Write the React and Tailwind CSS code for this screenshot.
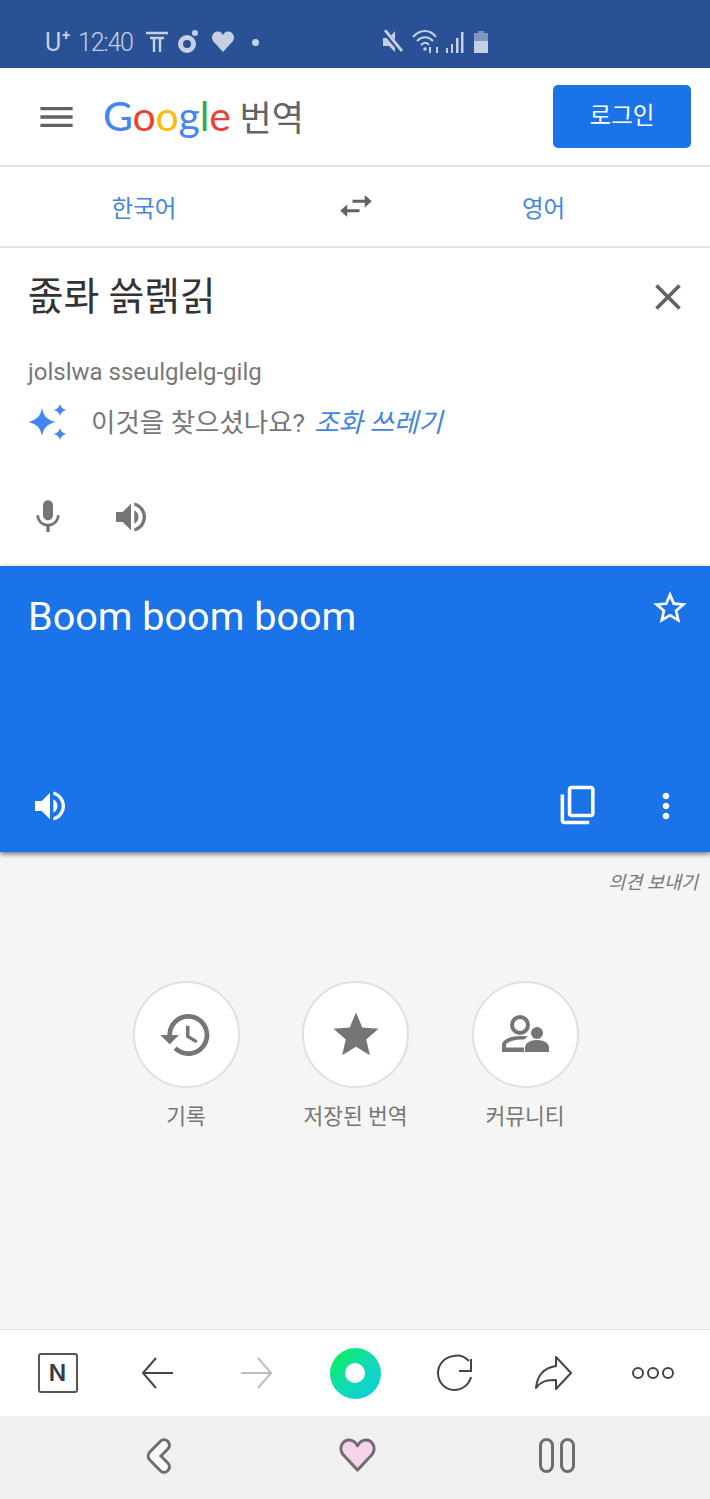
import React from 'react'

const KR = { fontFamily: 'Roboto, "Noto Sans CJK KR", sans-serif' }

const paths = {
  menu: 'M3 18h18v-2H3v2zm0-5h18v-2H3v2zm0-7v2h18V6H3z',
  swap: 'M6.99 11L3 15l3.99 4v-3H14v-2H6.99v-3zM21 9l-3.99-4v3H10v2h7.01v3L21 9z',
  close: 'M19 6.41L17.59 5 12 10.59 6.41 5 5 6.41 10.59 12 5 17.59 6.41 19 12 13.41 17.59 19 19 17.59 13.41 12z',
  mic: 'M12 14c1.66 0 2.99-1.34 2.99-3L15 5c0-1.66-1.34-3-3-3S9 3.34 9 5v6c0 1.66 1.34 3 3 3zm5.3-3c0 3-2.54 5.1-5.3 5.1S6.7 14 6.7 11H5c0 3.41 2.72 6.23 6 6.72V21h2v-3.28c3.28-.48 6-3.3 6-6.72h-1.7z',
  volume: 'M3 9v6h4l5 5V4L7 9H3zm13.5 3c0-1.77-1.02-3.29-2.5-4.03v8.05c1.48-.73 2.5-2.25 2.5-4.02zM14 3.23v2.06c2.89.86 5 3.54 5 6.71s-2.11 5.85-5 6.71v2.06c4.01-.91 7-4.49 7-8.77s-2.99-7.86-7-8.77z',
  starOutline: 'M22 9.24l-7.19-.62L12 2 9.19 8.63 2 9.24l5.46 4.73L5.82 21 12 17.27 18.18 21l-1.63-7.03L22 9.24zM12 15.4l-3.76 2.27 1-4.28-3.32-2.88 4.38-.38L12 6.1l1.71 4.04 4.38.38-3.32 2.88 1 4.28L12 15.4z',
  star: 'M12 17.27L18.18 21l-1.64-7.03L22 9.24l-7.19-.61L12 2 9.19 8.63 2 9.24l5.46 4.73L5.82 21z',
  copy: 'M2 6v15c0 1.100.9 2 2 2h14v-2H4V6H2zM8 1h11c1.100 0 2 .9 2 2v14c0 1.100-.9 2-2 2H8c-1.100 0-2-.9-2-2V3c0-1.100.9-2 2-2zm0 2v14h11V3H8z',
  dots: 'M12 8c1.1 0 2-.9 2-2s-.9-2-2-2-2 .9-2 2 .9 2 2 2zm0 2c-1.1 0-2 .9-2 2s.9 2 2 2 2-.9 2-2-.9-2-2-2zm0 6c-1.1 0-2 .9-2 2s.9 2 2 2 2-.9 2-2-.9-2-2-2z',
  history: 'M13 3c-4.97 0-9 4.03-9 9H1l3.89 3.89.07.14L9 12H6c0-3.87 3.13-7 7-7s7 3.13 7 7-3.13 7-7 7c-1.93 0-3.68-.79-4.94-2.06l-1.42 1.42C8.27 19.99 10.51 21 13 21c4.97 0 9-4.03 9-9s-4.03-9-9-9zm-1 5v5l4.28 2.54.72-1.21-3.5-2.08V8H12z',
}

const Icon = ({ name, className }) => (
  <svg viewBox="0 0 24 24" fill="currentColor" className={className} preserveAspectRatio="none">
    <path d={paths[name]} />
  </svg>
)

const StatusBar = () => (
  <div className="h-[68px] bg-[#2a5195] text-[#c5d0e3] flex items-center pt-[16px] pl-[45px]" style={KR}>
    <span className="text-[25px] leading-none w-[33px] relative">
      U<span className="absolute left-[17px] -top-[2px] text-[15px] font-bold">+</span>
    </span>
    <span className="text-[25px] leading-none tracking-[-1.2px] font-light w-[68px]">12:40</span>
    <svg viewBox="0 0 22 22" className="w-[22px] h-[22px]" fill="none" stroke="currentColor" strokeWidth="2.4">
      <path d="M0 2h22M4 7h14M8 7v14M14 7v14" />
    </svg>
    <svg viewBox="0 0 22 24" className="w-[22px] h-[24px] ml-[9px]" fill="none" stroke="currentColor" strokeWidth="5">
      <circle cx="10" cy="14" r="6.5" />
      <circle cx="18" cy="3" r="3" fill="currentColor" stroke="none" />
    </svg>
    <svg viewBox="0 0 24 24" className="w-[24px] h-[24px] ml-[12px]" fill="currentColor">
      <path d="M12 22L2 11C-1 6 3 1 7.500 1.500 9.500 1.700 11 3 12 5c1-2 2.500-3.300 4.500-3.500C21 1 25 6 22 11z" />
    </svg>
    <span className="w-[7px] h-[7px] rounded-full bg-current ml-[17px]" />
    <svg viewBox="0 0 20 24" className="w-[20px] h-[24px] ml-[124px]" fill="currentColor">
      <path d="M12 1v21l-6-6H0V8h6z" />
      <path d="M1 1l18 21" stroke="#2a5195" strokeWidth="5" />
      <path d="M2 0l17 21" stroke="currentColor" strokeWidth="2.800" />
    </svg>
    <svg viewBox="0 0 28 26" className="w-[28px] h-[26px] ml-[9px]" fill="none" stroke="currentColor" strokeWidth="2">
      <path d="M1 8c7-8 17-8 23 0M5 12c5-5 11-5 16 0M9 16c3-3 6-3 8 0" />
      <circle cx="13" cy="20" r="1.800" fill="currentColor" stroke="none" />
      <path d="M18 24v-6M25 24v-6" />
    </svg>
    <svg viewBox="0 0 18 22" className="w-[18px] h-[22px] ml-[6px]" fill="currentColor">
      <path d="M0 17h2v5H0zM5 13h2v9H5zM10 7h2.500v15H10zM15 1h2.500v21H15z" />
    </svg>
    <div className="w-[14px] h-[22px] ml-[10px] flex flex-col items-center">
      <div className="w-[6px] h-[2px] bg-[#7e95bd]" />
      <div className="w-[14px] h-[8px] bg-[#7e95bd]" />
      <div className="w-[14px] h-[12px] bg-[#c5d0e3]" />
    </div>
  </div>
)

const Header = () => (
  <div className="h-[99px] bg-white border-b-2 border-[#e2e2e2] flex items-center pl-[35px] pr-[19px]">
    <Icon name="menu" className="w-[43px] h-[40px] text-[#5f6368]" />
    <div className="flex items-baseline ml-[25px] -mt-[2px]">
      <span className="text-[41px] leading-none tracking-[-0.2px] font-normal" style={{ fontFamily: 'Lato, sans-serif' }}>
        <span className="text-[#4285f4]">G</span>
        <span className="text-[#ea4335]">o</span>
        <span className="text-[#fbbc05]">o</span>
        <span className="text-[#4285f4]">g</span>
        <span className="text-[#34a853]">l</span>
        <span className="text-[#ea4335]">e</span>
      </span>
      <span className="text-[35px] leading-none text-[#5f6368] ml-[9px]" style={KR}>번역</span>
    </div>
    <div className="ml-auto w-[138px] h-[63px] bg-[#1a73e8] rounded-[5px] flex items-center justify-center text-white text-[23.5px] font-normal -mt-[1px] pt-[1px]" style={KR}>
      로그인
    </div>
  </div>
)

const LangBar = () => (
  <div className="h-[81px] bg-white border-b-2 border-[#e2e2e2] grid grid-cols-[288px_136px_1fr] items-center text-[#4285e0] text-[23.5px] pt-[7px]" style={KR}>
    <span className="text-center">한국어</span>
    <div className="flex justify-center -mt-[9px]">
      <Icon name="swap" className="w-[42px] h-[38px] text-[#5f6368]" />
    </div>
    <span className="text-center pr-[47px]">영어</span>
  </div>
)

const Sparkles = () => (
  <svg viewBox="0 0 40 40" className="w-[40px] h-[40px] text-[#4285f4]" fill="currentColor">
    <path d="M14 5c1.500 8 5 12 14 14-9 2-12.500 6-14 14C12.500 25 9 21 0 19c9-2 12.500-6 14-14z" />
    <path d="M32 1c.8 3.500 2.700 5.200 6.500 6-3.800.8-5.700 2.500-6.500 6-.8-3.500-2.700-5.200-6.500-6 3.800-.8 5.700-2.500 6.500-6zM32 25c.8 3.500 2.700 5.200 6.500 6-3.800.8-5.700 2.500-6.500 6-.8-3.500-2.700-5.200-6.500-6 3.800-.8 5.700-2.500 6.500-6z" />
  </svg>
)

const SourcePanel = () => (
  <div className="h-[318px] bg-white pl-[28px] pr-[24px] relative" style={KR}>
    <div className="flex items-center justify-between pt-[24px]">
      <span className="text-[39px] leading-[50px] text-[#333] tracking-[-0.3px]">졼롸 쓹렑긹</span>
      <Icon name="close" className="w-[44px] h-[44px] text-[#5f6368] -mr-[4px]" />
    </div>
    <p className="text-[24px] leading-[30px] text-[#777] mt-[35px]">jolslwa sseulglelg-gilg</p>
    <div className="flex items-center mt-[16px] text-[26.5px] leading-[36px]">
      <Sparkles />
      <span className="text-[#777] ml-[23px]">이것을 찾으셨나요?</span>
      <span className="text-[#4285e0] italic ml-[9px]">조화 쓰레기</span>
    </div>
    <div className="flex items-center mt-[54px] text-[#757575]">
      <Icon name="mic" className="w-[40px] h-[40px]" />
      <Icon name="volume" className="w-[40px] h-[40px] ml-[43px]" />
    </div>
  </div>
)

const ResultPanel = () => (
  <div className="h-[286px] bg-[#1a73e8] shadow-[0_2px_5px_rgba(0,0,0,0.55)] relative z-10 pl-[28px] pr-[24px] text-white flex flex-col" style={KR}>
    <div className="flex justify-between items-start pt-[25px]">
      <span className="text-[39.6px] leading-[52px]">Boom boom boom</span>
      <Icon name="starOutline" className="w-[40px] h-[40px] -mt-[3px] -mr-[4px]" />
    </div>
    <div className="mt-auto pb-[26px] flex items-center">
      <Icon name="volume" className="w-[40px] h-[40px] ml-[2px]" />
      <Icon name="copy" className="w-[43px] h-[42px] ml-auto mr-[46px] -mt-[2px]" />
      <Icon name="dots" className="w-[40px] h-[40px]" />
    </div>
  </div>
)

const Shortcut = ({ label, children }) => (
  <div className="w-[169.5px] flex flex-col items-center">
    <div className="w-[107px] h-[107px] rounded-full bg-white border-2 border-[#e0e0e0] flex items-center justify-center text-[#757575]">
      {children}
    </div>
    <span className="text-[21.5px] leading-[28px] text-[#757575] mt-[15px] whitespace-nowrap">{label}</span>
  </div>
)

const People = () => (
  <svg viewBox="0 0 48 40" className="w-[48px] h-[40px]" fill="currentColor">
    <path d="M19 0a10 10 0 1 1 0 20 10 10 0 0 1 0-20zm0 4a6 6 0 1 0 0 12 6 6 0 0 0 0-12z" />
    <path d="M1 37v-7c0-5 8-9 19-9 3 0 5 .2 7 .6l-4 3c-1-.1-2-.1-3-.1-8 0-15 3-15 6v2h18v4.500z" />
    <circle cx="36" cy="18" r="6" />
    <path d="M24 37v-4c0-5 5-8 12-8s12 3 12 8v4z" />
  </svg>
)

const Shortcuts = () => (
  <div className="flex-1 bg-[#f5f5f5] relative" style={KR}>
    <p className="text-right italic text-[18.5px] text-[#777] pr-[12px] pt-[19px] leading-[24px]">의견 보내기</p>
    <div className="flex justify-center mt-[86px] ml-[1px]">
      <Shortcut label="기록">
        <Icon name="history" className="w-[56px] h-[56px]" />
      </Shortcut>
      <Shortcut label="저장된 번역">
        <Icon name="star" className="w-[54px] h-[54px]" />
      </Shortcut>
      <Shortcut label="커뮤니티">
        <People />
      </Shortcut>
    </div>
  </div>
)

const Toolbar = () => (
  <div className="h-[87px] bg-white border-t border-[#e4e4e4] grid grid-cols-7 px-[8px] items-center justify-items-center text-[#444]">
    <div className="w-[40px] h-[40px] border-2 border-[#555] rounded-[3px] flex items-center justify-center text-[#333d47] text-[23px] font-semibold" style={{ fontFamily: 'Inter, sans-serif' }}>N</div>
    <svg viewBox="0 0 36 36" className="w-[36px] h-[36px] ml-[3px]" fill="none" stroke="currentColor" strokeWidth="2">
      <path d="M33 18H3M16 3L3 18l13 15" />
    </svg>
    <svg viewBox="0 0 36 36" className="w-[36px] h-[36px] text-[#bdbdbd]" fill="none" stroke="currentColor" strokeWidth="2">
      <path d="M3 18h30M20 3l13 15-13 15" />
    </svg>
    <div className="w-[51px] h-[51px] ml-[1px] rounded-full bg-gradient-to-br from-[#18f03c] via-[#12dcae] to-[#19c8e6] flex items-center justify-center">
      <div className="w-[20px] h-[20px] rounded-full bg-white" />
    </div>
    <svg viewBox="0 0 38 38" className="w-[38px] h-[38px] ml-[1px]" fill="none" stroke="currentColor" strokeWidth="2">
      <path d="M33 7C28 2 22 1 18 2 8 3 2 11 2 19c0 9 7 17 16 17 8 0 15-5 17-13" />
      <path d="M35 5v12H23" />
    </svg>
    <svg viewBox="0 0 38 36" className="w-[38px] h-[36px]" fill="none" stroke="currentColor" strokeWidth="2" strokeLinejoin="round">
      <path d="M22 2l15 16-15 16v-9c-9 0-15 1-20 8 1-11 7-20 20-22z" />
    </svg>
    <svg viewBox="0 0 42 14" className="w-[42px] h-[14px] ml-[1px]" fill="none" stroke="currentColor" strokeWidth="2">
      <circle cx="6" cy="7" r="5" />
      <circle cx="21" cy="7" r="5" />
      <circle cx="36" cy="7" r="5" />
    </svg>
  </div>
)

const NavBar = () => (
  <div className="h-[83px] bg-[#f0f0f0] grid grid-cols-3 pl-[60px] pr-[52px] pb-[4px] items-center justify-items-center">
    <svg viewBox="0 0 28 38" className="w-[28px] h-[36px]" fill="#fafafa" stroke="#6f6b70" strokeWidth="3">
      <path d="M3 15L15 3c3-3 9 0 9 5 0 2-1 3-2 4l-7 7 7 7c1 1 2 2 2 4 0 5-6 8-9 5L3 23c-2-2-2-6 0-8z" />
    </svg>
    <svg viewBox="0 0 38 36" className="w-[37px] h-[35px] -ml-[2px]" fill="#f7d3e9" stroke="#6f6b70" strokeWidth="3" strokeLinejoin="round">
      <path d="M19 33L4 17C-1 10 4 2 10 2c4 0 7 2 9 6 2-4 5-6 9-6 6 0 11 8 6 15z" />
    </svg>
    <div className="flex gap-[6px] -ml-[2px]">
      <div className="w-[15px] h-[35px] rounded-full border-[3px] border-[#6f6b70]" />
      <div className="w-[15px] h-[35px] rounded-full border-[3px] border-[#6f6b70]" />
    </div>
  </div>
)

export default function App() {
  return (
    <div className="w-[710px] h-[1499px] flex flex-col overflow-hidden bg-[#f5f5f5]">
      <StatusBar />
      <Header />
      <LangBar />
      <SourcePanel />
      <ResultPanel />
      <Shortcuts />
      <Toolbar />
      <NavBar />
    </div>
  )
}
